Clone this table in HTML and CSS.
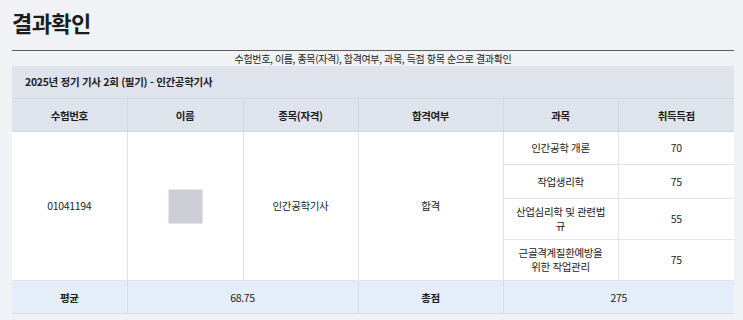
FILE: index.html
```html
<!DOCTYPE html>
<html lang="ko">
<head>
<meta charset="utf-8">
<link rel="stylesheet" href="styles.css">
</head>
<body>
<div class="page">
  <h1 class="title">결과확인</h1>
  <p class="desc">수험번호, 이름, 종목(자격), 합격여부, 과목, 득점 항목 순으로 결과확인</p>
  <div class="card">
    <div class="card-head">2025년 정기 기사 2회 (필기) - 인간공학기사</div>
    <table class="result">
      <colgroup>
        <col class="c1"><col class="c2"><col class="c3"><col class="c4"><col class="c5"><col class="c6">
      </colgroup>
      <thead>
        <tr><th>수험번호</th><th>이름</th><th>종목(자격)</th><th>합격여부</th><th>과목</th><th>취득득점</th></tr>
      </thead>
      <tbody>
        <tr class="r1">
          <td rowspan="4">01041194</td>
          <td rowspan="4"><span class="photo"></span></td>
          <td rowspan="4">인간공학기사</td>
          <td rowspan="4">합격</td>
          <td>인간공학 개론</td>
          <td>70</td>
        </tr>
        <tr class="r2"><td>작업생리학</td><td>75</td></tr>
        <tr class="r3"><td class="subj">산업심리학 및 관련법규</td><td>55</td></tr>
        <tr class="r4"><td class="subj">근골격계질환예방을 위한 작업관리</td><td>75</td></tr>
      </tbody>
      <tfoot>
        <tr><th>평균</th><td colspan="2">68.75</td><th>총점</th><td colspan="2">275</td></tr>
      </tfoot>
    </table>
  </div>
</div>
</body>
</html>
```
FILE: styles.css
```css
html, body {
  margin: 0;
  padding: 0;
  background: #f0f2f6;
}
body {
  font-family: "Noto Sans CJK KR", "Noto Sans", sans-serif;
  color: #1b1d21;
}
.page {
  padding: 0 9px 0 12px;
}
.title {
  margin: 0;
  padding-top: 7px;
  box-sizing: border-box;
  height: 51px;
  font-size: 22px;
  font-weight: 700;
  line-height: 30px;
  letter-spacing: -0.6px;
  border-bottom: 1px solid #5b5d62;
}
.desc {
  margin: 0;
  text-align: center;
  font-size: 10px;
  line-height: 15px;
  letter-spacing: -0.35px;
  color: #1b1d21;
}
.card {
  background: #dfe3eb;
}
.card-head {
  height: 32px;
  line-height: 32px;
  padding-left: 13px;
  font-size: 10.5px;
  font-weight: 700;
  letter-spacing: -0.3px;
  border-bottom: 1px solid #d3d8e0;
}
.result {
  width: 100%;
  border-collapse: collapse;
  table-layout: fixed;
  font-size: 10.5px;
  letter-spacing: -0.35px;
}
.c1 { width: 115px; }
.c2 { width: 116px; }
.c3 { width: 115px; }
.c4 { width: 145px; }
.c5 { width: 115px; }
.c6 { width: 116px; }
.result th, .result td {
  text-align: center;
  vertical-align: middle;
  padding: 0 10px;
  border: 1px solid #e3e4e8;
}
.result tr > :first-child { border-left: none; }
.result tr > :last-child { border-right: none; }
.result thead th {
  height: 32px;
  background: #dfe3eb;
  font-weight: 700;
  border-top: none;
  border-color: #d3d8e0;
}
.result tbody td {
  background: #fff;
  line-height: 14px;
}
.r1 td { height: 32px; }
.r2 td { height: 33px; }
.r3 td { height: 40px; }
.r4 td { height: 40px; }
.subj { padding: 0 18px; }
.photo {
  display: inline-block;
  width: 33px;
  height: 33px;
  background: #cdcdd5;
  border: 1px solid #e6e6ea;
  vertical-align: middle;
}
.result tfoot th, .result tfoot td {
  height: 32px;
  background: #e3eef9;
  border-color: #d5dde6;
}
.result tfoot th { font-weight: 700; }
```
